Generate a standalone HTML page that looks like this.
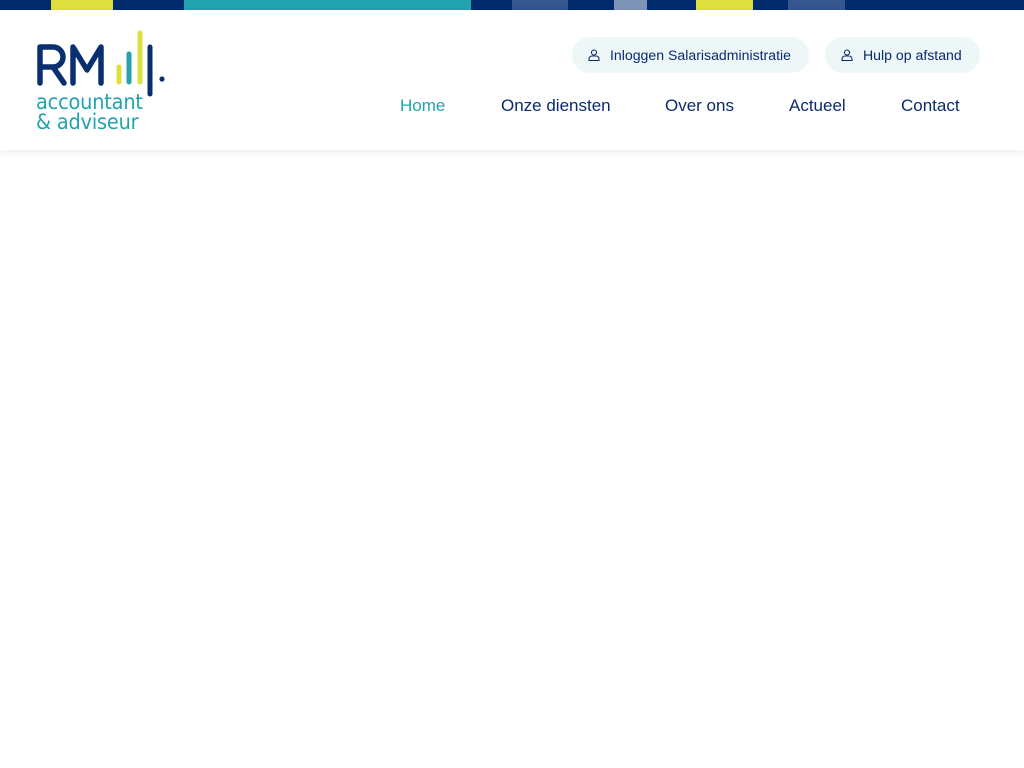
<!DOCTYPE html>
<html><head><meta charset="utf-8"><style>
*{margin:0;padding:0;box-sizing:border-box}
body{width:1024px;height:768px;background:#fff;font-family:"Liberation Sans",Arial,sans-serif;position:relative;overflow:hidden}
.bar{position:absolute;top:0;height:10px}
header{position:absolute;top:10px;left:0;width:1024px;height:140px;background:#fff;box-shadow:0 2px 8px rgba(0,0,0,0.08)}
.btn{position:absolute;top:27px;height:36px;border-radius:18px;background:#eef7f8;color:#0a2a6e;font-size:14.1px;line-height:37px;padding-left:38px}
.btn svg{position:absolute;left:16px;top:12px}
.nav{position:absolute;top:86px;font-size:17px;color:#0a2a6e}
.lt{position:absolute;left:36px;color:#22a3ae;font-size:21px;font-family:"DejaVu Sans",sans-serif;line-height:1;transform:scaleX(0.92);transform-origin:0 0;letter-spacing:-0.2px}
</style></head><body>
<div class="bar" style="left:0;width:1024px;background:#002b6d"></div>
<div class="bar" style="left:51px;width:62px;background:#dfe040"></div>
<div class="bar" style="left:184px;width:287px;background:#22a3ae"></div>
<div class="bar" style="left:512px;width:56px;background:#35568e"></div>
<div class="bar" style="left:614px;width:33px;background:#7e95b8"></div>
<div class="bar" style="left:696px;width:57px;background:#dfe040"></div>
<div class="bar" style="left:788px;width:57px;background:#35568e"></div>
<header>
<svg style="position:absolute;left:0;top:0" width="180" height="140">
<g fill="none" stroke="#0a2f6f" stroke-width="5.5" stroke-linejoin="round" stroke-linecap="round">
<path d="M40 73 V37 H53 a10 10 0 0 1 0 20 H42 M53 57 L64 73"/>
<path d="M73 73 V37 L87 60 L101 37 V73"/>
</g>
<g stroke-width="5" stroke-linecap="round">
<line x1="119" y1="57" x2="119" y2="72" stroke="#dfe040"/>
<line x1="129" y1="44" x2="129" y2="72" stroke="#22a3ae"/>
<line x1="140" y1="23" x2="140" y2="72" stroke="#dfe040"/>
<line x1="150" y1="37" x2="150" y2="84" stroke="#0a2f6f"/>
</g>
<circle cx="162" cy="69" r="2.6" fill="#0a2f6f"/>
</svg>
<div class="lt" style="top:82px">accountant</div>
<div class="lt" style="top:102px">&amp; adviseur</div>
<div class="btn" style="left:572px;width:237px">
<svg width="12" height="12" viewBox="0 0 12 12" fill="none" stroke="#0a2a6e" stroke-width="1.1"><circle cx="6" cy="3.5" r="2.5"/><path d="M1 11.5 V10 a3 3 0 0 1 3-3 h4 a3 3 0 0 1 3 3 v1.5 z"/></svg>Inloggen Salarisadministratie</div>
<div class="btn" style="left:825px;width:155px">
<svg width="12" height="12" viewBox="0 0 12 12" fill="none" stroke="#0a2a6e" stroke-width="1.1"><circle cx="6" cy="3.5" r="2.5"/><path d="M1 11.5 V10 a3 3 0 0 1 3-3 h4 a3 3 0 0 1 3 3 v1.5 z"/></svg>Hulp op afstand</div>
<div class="nav" style="left:400px;color:#22a3ae">Home</div>
<div class="nav" style="left:501px">Onze diensten</div>
<div class="nav" style="left:665px">Over ons</div>
<div class="nav" style="left:789px">Actueel</div>
<div class="nav" style="left:901px">Contact</div>
</header>
</body></html>
